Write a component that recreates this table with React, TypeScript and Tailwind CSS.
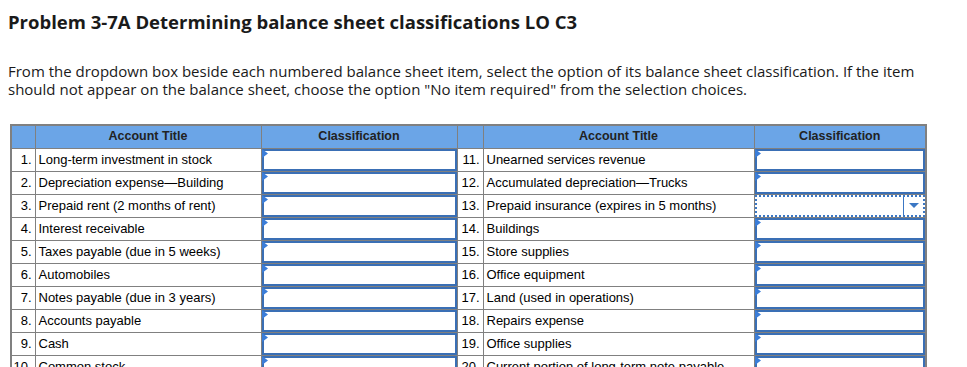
import React from "react";

const left = [
  "Long-term investment in stock",
  "Depreciation expense\u2014Building",
  "Prepaid rent (2 months of rent)",
  "Interest receivable",
  "Taxes payable (due in 5 weeks)",
  "Automobiles",
  "Notes payable (due in 3 years)",
  "Accounts payable",
  "Cash",
  "Common stock",
];
const right = [
  "Unearned services revenue",
  "Accumulated depreciation\u2014Trucks",
  "Prepaid insurance (expires in 5 months)",
  "Buildings",
  "Store supplies",
  "Office equipment",
  "Land (used in operations)",
  "Repairs expense",
  "Office supplies",
  "Current portion of long-term note payable",
];

function Input({ active }: { active?: boolean }) {
  if (active) {
    return (
      <div className="relative h-[22px] border-2 border-dotted border-[#3b77c4] bg-white flex">
        <div className="flex-1" />
        <div className="w-[20px] border-l border-[#3b77c4] flex items-center justify-center">
          <svg width="10" height="6" viewBox="0 0 10 6">
            <polygon points="0,0 10,0 5,5" fill="#3b77c4" />
          </svg>
        </div>
      </div>
    );
  }
  return (
    <div className="relative h-[22px] border-2 border-[#3a6fb5] bg-white">
      <svg className="absolute -left-[2px] -top-[2px]" width="6" height="9" viewBox="0 0 6 9">
        <polygon points="0,0 6,4.5 0,9" fill="#3b7dd8" />
      </svg>
    </div>
  );
}

export default function App() {
  return (
    <div className="w-[967px] h-[367px] overflow-hidden bg-white text-[#222]">
      <h1 className="pl-[8px] pt-[11px] text-[18.5px] font-bold leading-[22px] text-[#1a1a1a]" style={{ fontFamily: "'Open Sans', Lato, sans-serif" }}>
        Problem 3-7A Determining balance sheet classifications LO C3
      </h1>
      <p className="pl-[8px] pt-[29px] text-[15px] leading-[18px] text-[#1a1a1a]" style={{ fontFamily: "'Open Sans', Lato, sans-serif" }}>
        From the dropdown box beside each numbered balance sheet item, select the option of its balance sheet classification. If the item
        <br />
        should not appear on the balance sheet, choose the option "No item required" from the selection choices.
      </p>
      <table
        className="ml-[10px] mt-[26px] border-collapse border-2 border-[#808080] text-[13px] text-black"
        style={{ fontFamily: "'Liberation Sans', Arial, sans-serif" }}
      >
        <colgroup>
          <col className="w-[24px]" />
          <col className="w-[226px]" />
          <col className="w-[196px]" />
          <col className="w-[26px]" />
          <col className="w-[271px]" />
          <col className="w-[172px]" />
        </colgroup>
        <thead>
          <tr className="h-[23px] bg-[#6ba5e7] text-[12.5px] text-[#222]">
            <th className="border border-[#808080]"></th>
            <th className="border border-[#808080] font-bold">Account Title</th>
            <th className="border border-[#808080] font-bold">Classification</th>
            <th className="border border-[#808080]"></th>
            <th className="border border-[#808080] font-bold">Account Title</th>
            <th className="border border-[#808080] font-bold">Classification</th>
          </tr>
        </thead>
        <tbody>
          {left.map((l, i) => (
            <tr key={i} className="h-[23px]">
              <td className="border border-[#808080] text-right pr-[3px] leading-none">{i + 1}.</td>
              <td className="border border-[#808080] pl-[3px] leading-none whitespace-nowrap">{l}</td>
              <td className="border border-[#808080] p-0">
                <Input />
              </td>
              <td className="border border-[#808080] text-right pr-[3px] leading-none">{i + 11}.</td>
              <td className="border border-[#808080] pl-[3px] leading-none whitespace-nowrap">{right[i]}</td>
              <td className="border border-[#808080] p-0">
                <Input active={i === 2} />
              </td>
            </tr>
          ))}
        </tbody>
      </table>
    </div>
  );
}
